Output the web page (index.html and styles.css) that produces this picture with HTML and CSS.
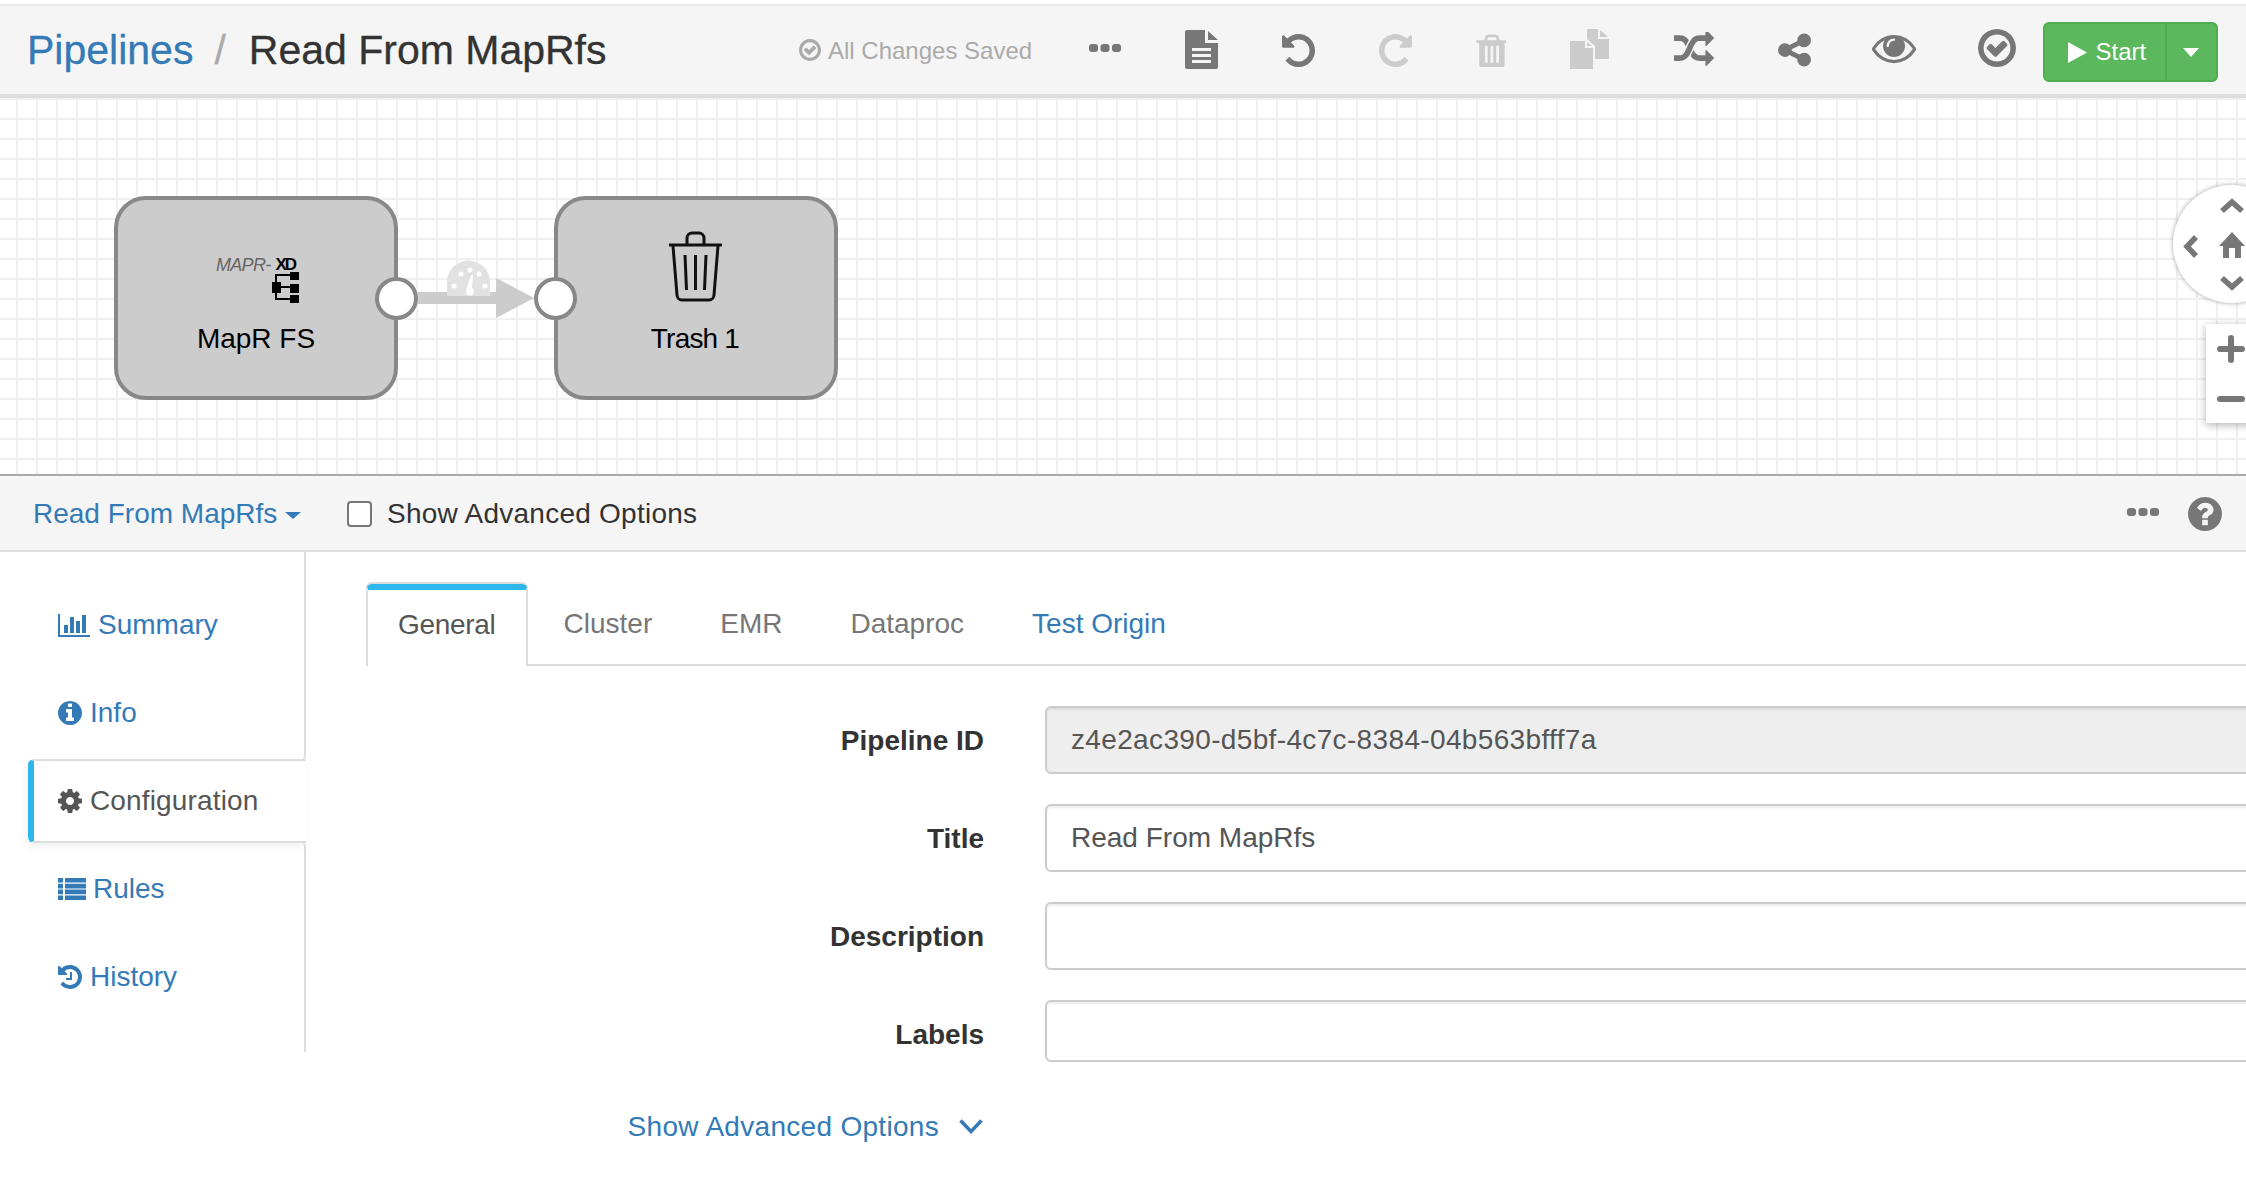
FILE: index.html
```html
<!DOCTYPE html>
<html lang="en">
<head>
<meta charset="utf-8">
<title>Read From MapRfs</title>
<link rel="stylesheet" href="styles.css">
</head>
<body>
<header class="topbar">
  <div class="crumbs">
    <a class="crumb-link">Pipelines</a>
    <span class="crumb-sep">/</span>
    <span class="crumb-title">Read From MapRfs</span>
  </div>
  <div class="saved">
    <svg class="saved-icon" viewBox="128 128 1536 1536"><path d="M1299 813l-422 422q-19 19-45 19t-45-19l-294-294q-19-19-19-45t19-45l102-102q19-19 45-19t45 19l147 147 275-275q19-19 45-19t45 19l102 102q19 19 19 45t-19 45zm141 83q0-148-73-273t-198-198-273-73-273 73-198 198-73 273 73 273 198 198 273 73 273-73 198-198 73-273zm224 0q0 209-103 385.500t-279.500 279.500-385.500 103-385.500-103-279.500-279.500-103-385.500 103-385.500 279.500-279.500 385.500-103 385.500 103 279.500 279.500 103 385.500z"/></svg>
    <span>All Changes Saved</span>
  </div>
  <div class="tools">
    <svg class="tool dots" viewBox="0 0 32 8"><rect x="0" y="0" width="9" height="8" rx="3"/><rect x="11.500" y="0" width="9" height="8" rx="3"/><rect x="23" y="0" width="9" height="8" rx="3"/></svg>
    <svg class="tool doc" viewBox="0 0 33 39"><path fill-rule="evenodd" d="M2 0H20V13H33V37a2 2 0 0 1-2 2H2a2 2 0 0 1-2-2V2a2 2 0 0 1 2-2zM7 18v3H26v-3zM7 24v3H26v-3zM7 30v3H26v-3z"/><path d="M23 1L33 10H23z"/></svg>
    <svg class="tool undo" viewBox="128 128 1536 1536"><path d="M1664 896q0 156-61 298t-164 245-245 164-298 61q-172 0-327-72.500t-264-204.500q-7-10-6.500-22.500t8.500-20.500l137-138q10-9 25-9 16 2 23 12 73 95 179 147t225 52q104 0 198.500-40.500t163.500-109.500 109.500-163.500 40.500-198.500-40.500-198.500-109.500-163.500-163.500-109.500-198.500-40.500q-98 0-188 35.500t-160 101.500l137 138q31 30 14 69-17 40-59 40h-448q-26 0-45-19t-19-45v-448q0-42 40-59 39-17 69 14l130 129q107-101 244.500-156.500t284.500-55.500q156 0 298 61t245 164 164 245 61 298z"/></svg>
    <svg class="tool undo redo off" viewBox="128 128 1536 1536"><path d="M1664 896q0 156-61 298t-164 245-245 164-298 61q-172 0-327-72.500t-264-204.500q-7-10-6.500-22.500t8.500-20.500l137-138q10-9 25-9 16 2 23 12 73 95 179 147t225 52q104 0 198.500-40.500t163.500-109.500 109.500-163.500 40.500-198.500-40.500-198.500-109.500-163.500-163.500-109.500-198.500-40.500q-98 0-188 35.500t-160 101.500l137 138q31 30 14 69-17 40-59 40h-448q-26 0-45-19t-19-45v-448q0-42 40-59 39-17 69 14l130 129q107-101 244.500-156.500t284.500-55.500q156 0 298 61t245 164 164 245 61 298z"/></svg>
    <svg class="tool trash off" viewBox="128 64 1408 1536"><path d="M704 1376v-704q0-14-9-23t-23-9h-64q-14 0-23 9t-9 23v704q0 14 9 23t23 9h64q14 0 23-9t9-23zm256 0v-704q0-14-9-23t-23-9h-64q-14 0-23 9t-9 23v704q0 14 9 23t23 9h64q14 0 23-9t9-23zm256 0v-704q0-14-9-23t-23-9h-64q-14 0-23 9t-9 23v704q0 14 9 23t23 9h64q14 0 23-9t9-23zm-544-992h448l-48-117q-7-9-17-11h-317q-10 2-17 11zm928 32v64q0 14-9 23t-23 9h-96v948q0 83-47 143.500t-113 60.500h-832q-66 0-113-58.500t-47-141.500v-952h-96q-14 0-23-9t-9-23v-64q0-14 9-23t23-9h309l70-167q15-37 54-63t79-26h320q40 0 79 26t54 63l70 167h309q14 0 23 9t9 23z"/></svg>
    <svg class="tool copy off" viewBox="0 0 39 40"><path fill-rule="evenodd" d="M0 12H15V19H23V40H0zM17 13L22 17H17z"/><path d="M17 0H28V10H39V30H25V17L17 10zM30 1L38 8H30z"/></svg>
    <svg class="tool shuffle" viewBox="0 128 1792 1536"><path d="M666 481q-60 92-137 273-22-45-37-72.500t-40.500-63.500-51-56.500-63-35-81.500-14.500h-224q-14 0-23-9t-9-23v-192q0-14 9-23t23-9h224q250 0 410 225zm1126 799q0 14-9 23l-320 320q-9 9-23 9-13 0-22.500-9.500t-9.500-22.500v-192q-32 0-85 .5t-81 1-73-1-71-5-64-10.500-63-18.500-58-28.500-59-40-55-53.500-56-69.500q59-93 136-273 22 45 37 72.500t40.500 63.500 51 56.500 63 35 81.500 14.500h256v-192q0-14 9-23t23-9q12 0 24 10l319 319q9 9 9 23zm0-896q0 14-9 23l-320 320q-9 9-23 9-13 0-22.500-9.500t-9.500-22.500v-192h-256q-48 0-87 15t-69 45-51 61.500-45 77.500q-32 62-78 171-29 66-49.500 111t-54 105-64 100-74 83-90 68.500-106.500 42-128 16.500h-224q-14 0-23-9t-9-23v-192q0-14 9-23t23-9h224q48 0 87-15t69-45 51-61.500 45-77.500q32-62 78-171 29-66 49.500-111t54-105 64-100 74-83 90-68.500 106.500-42 128-16.500h256v-192q0-14 9-23t23-9q12 0 24 10l319 319q9 9 9 23z"/></svg>
    <svg class="tool share" viewBox="128 128 1536 1536"><path d="M1344 1024q133 0 226.500 93.500t93.500 226.500-93.500 226.500-226.500 93.500-226.500-93.500-93.500-226.500q0-12 2-34l-360-180q-92 86-218 86-133 0-226.500-93.500t-93.500-226.500 93.500-226.500 226.500-93.500q126 0 218 86l360-180q-2-22-2-34 0-133 93.500-226.500t226.500-93.500 226.500 93.500 93.500 226.500-93.500 226.500-226.500 93.500q-126 0-218-86l-360 180q2 22 2 34t-2 34l360 180q92-86 218-86z"/></svg>
    <svg class="tool eye" viewBox="0 256 1792 1280"><path d="M1664 960q-152-236-381-353 61 104 61 225 0 185-131.500 316.500t-316.500 131.500-316.500-131.500-131.500-316.500q0-121 61-225-229 117-381 353 133 205 333.500 326.500t434.500 121.500 434.500-121.500 333.500-326.500zm-720-384q0-20-14-34t-34-14q-125 0-214.500 89.500t-89.500 214.500q0 20 14 34t34 14 34-14 14-34q0-86 61-147t147-61q20 0 34-14t14-34zm848 384q0 34-20 69-140 230-376.500 368.500t-499.500 138.500-499.500-139-376.500-368q-20-35-20-69t20-69q140-229 376.500-368t499.500-139 499.500 139 376.500 368q20 35 20 69z"/></svg>
    <svg class="tool check" viewBox="128 128 1536 1536"><path d="M1299 813l-422 422q-19 19-45 19t-45-19l-294-294q-19-19-19-45t19-45l102-102q19-19 45-19t45 19l147 147 275-275q19-19 45-19t45 19l102 102q19 19 19 45t-19 45zm141 83q0-148-73-273t-198-198-273-73-273 73-198 198-73 273 73 273 198 198 273 73 273-73 198-198 73-273zm224 0q0 209-103 385.500t-279.500 279.500-385.500 103-385.500-103-279.500-279.500-103-385.500 103-385.500 279.500-279.500 385.500-103 385.500 103 279.500 279.500 103 385.500z"/></svg>
  </div>
  <div class="start">
    <div class="start-main">
      <svg class="play" viewBox="0 0 19 21"><path d="M0 0L19 10.500L0 21z"/></svg>
      <span>Start</span>
    </div>
    <div class="start-caret"><i class="caret-white"></i></div>
  </div>
</header>

<section class="canvas">
  <div class="node node-source">
    <div class="mapr-logo"><span class="mapr-thin">MAPR-</span><b class="mapr-xd">XD</b></div>
    <svg class="mapr-tree" viewBox="0 0 27 31"><path class="tree-line" d="M4 15V3H18M4 15H18M4 15V27H18"/><rect x="0" y="10" width="9" height="11"/><rect x="18" y="0" width="9" height="8"/><rect x="18" y="12" width="9" height="9"/><rect x="18" y="23" width="9" height="8"/></svg>
    <div class="node-label">MapR FS</div>
    <span class="port port-out"></span>
  </div>
  <svg class="edge" viewBox="0 0 130 60">
    <path class="edge-arrow" d="M8 32H86V18L124 38L86 58V44H8z"/>
    <path class="gauge" d="M37 36V22a21 21 0 0 1 43 0V36z"/>
    <circle class="gauge-dot" cx="44" cy="26" r="2.500"/><circle class="gauge-dot" cx="51" cy="14" r="2.500"/><circle class="gauge-dot" cx="60" cy="10" r="2.500"/><circle class="gauge-dot" cx="69" cy="14" r="2.500"/><circle class="gauge-dot" cx="75" cy="26" r="2.500"/>
    <path class="gauge-dot" d="M61 15L63 15L62 28a4 4 0 1 1-6 3z"/>
  </svg>
  <div class="node node-target">
    <svg class="bin" viewBox="0 0 55 72"><path class="bin-line" d="M1 15H54M19 15V8a5 5 0 0 1 5-5H31a5 5 0 0 1 5 5V15M5 16L9 65a5 5 0 0 0 5 5H41a5 5 0 0 0 5-5L50 16M17 25L18.500 60M27.500 25V60M38 25L36.500 60"/></svg>
    <div class="node-label node-label-tight">Trash 1</div>
    <span class="port port-in"></span>
  </div>
  <div class="pan">
    <svg class="pan-icons" viewBox="0 0 73 118">
      <path class="nav-stroke" d="M49 26L59 17L69 26M23 52L14 61.500L23 71M49 93L59 102L69 93"/>
      <path class="nav-fill" fill-rule="evenodd" d="M59 47L72 61H68V73H62V63H56V73H50V61H46z"/>
    </svg>
  </div>
  <div class="zoomer">
    <svg class="zoom-icons" viewBox="0 0 40 99"><path class="zoom-stroke" d="M14 25H36M25 14V36M14 75H36"/></svg>
  </div>
</section>

<div class="subbar">
  <a class="pipe-menu">Read From MapRfs<i class="caret-blue"></i></a>
  <label class="adv-check"><input class="adv-box" type="checkbox"><span class="adv-text">Show Advanced Options</span></label>
  <div class="subbar-right">
    <svg class="sub-dots" viewBox="0 0 32 10"><rect x="0" y="1" width="9" height="8" rx="3"/><rect x="11.500" y="1" width="9" height="8" rx="3"/><rect x="23" y="1" width="9" height="8" rx="3"/></svg>
    <svg class="help" viewBox="128 128 1536 1536"><path d="M1024 1376v-192q0-14-9-23t-23-9h-192q-14 0-23 9t-9 23v192q0 14 9 23t23 9h192q14 0 23-9t9-23zm256-672q0-88-55.500-163t-138.500-116-170-41q-243 0-371 213-15 24 8 42l132 100q7 6 19 6 16 0 25-12 53-68 86-92 34-24 86-24 48 0 85.500 26t37.500 59q0 38-20 61t-68 45q-63 28-115.500 86.500t-52.500 125.500v36q0 14 9 23t23 9h192q14 0 23-9t9-23q0-19 21.500-49.500t54.500-49.500q32-18 49-28.500t46-35 44.500-48 28-60.500 12.500-81zm384 192q0 209-103 385.500t-279.500 279.500-385.500 103-385.500-103-279.500-279.500-103-385.500 103-385.500 279.500-279.500 385.500-103 385.500 103 279.500 279.500 103 385.500z"/></svg>
  </div>
</div>

<main class="panel">
  <nav class="side">
    <div class="side-top"></div>
    <a class="side-item">
      <svg class="side-icon icon-bars" viewBox="0 0 2048 1792"><path d="M640 896v512h-256v-512h256zm384-512v1024h-256v-1024h256zm1024 1152v128h-2048v-1472h128v1344h1920zm-640-896v768h-256v-768h256zm384-384v1152h-256v-1152h256z"/></svg>
      <span>Summary</span>
    </a>
    <a class="side-item side-before">
      <svg class="side-icon icon-round" viewBox="128 128 1536 1536"><path d="M1152 1376v-160q0-14-9-23t-23-9h-96v-512q0-14-9-23t-23-9h-320q-14 0-23 9t-9 23v160q0 14 9 23t23 9h96v320h-96q-14 0-23 9t-9 23v160q0 14 9 23t23 9h448q14 0 23-9t9-23zm-128-896v-160q0-14-9-23t-23-9h-192q-14 0-23 9t-9 23v160q0 14 9 23t23 9h192q14 0 23-9t9-23zm640 416q0 209-103 385.500t-279.500 279.500-385.500 103-385.500-103-279.500-279.500-103-385.500 103-385.500 279.500-279.500 385.500-103 385.500 103 279.500 279.500 103 385.500z"/></svg>
      <span>Info</span>
    </a>
    <a class="side-item side-active">
      <svg class="side-icon icon-round" viewBox="128 128 1536 1536"><path d="M1152 896q0-106-75-181t-181-75-181 75-75 181 75 181 181 75 181-75 75-181zm512-109v222q0 12-8 23t-20 13l-185 28q-19 54-39 91 35 50 107 138 10 12 10 25t-9 23q-27 37-99 108t-94 71q-12 0-26-9l-138-108q-44 23-91 38-16 136-29 186-7 28-36 28h-222q-14 0-24.500-8.500t-11.500-21.500l-28-184q-49-16-90-37l-141 107q-10 9-25 9-14 0-25-11-126-114-165-168-7-10-7-23 0-12 8-23 15-21 51-66.500t54-70.500q-27-50-41-99l-183-27q-13-2-21-12.500t-8-23.500v-222q0-12 8-23t19-13l186-28q14-46 39-92-40-57-107-138-10-12-10-24 0-10 9-23 26-36 98.500-107.500t94.500-71.500q13 0 26 10l138 107q44-23 91-38 16-136 29-186 7-28 36-28h222q14 0 24.500 8.500t11.500 21.500l28 184q49 16 90 37l142-107q9-9 24-9 13 0 25 10 129 119 165 170 7 8 7 22 0 12-8 23-15 21-51 66.500t-54 70.500q26 50 41 98l183 28q13 2 21 12.500t8 23.500z"/></svg>
      <span class="side-config">Configuration</span>
    </a>
    <a class="side-item side-after">
      <svg class="side-icon icon-list" viewBox="0 0 28 22"><path d="M0 0H5V4.600H0zM7 0H28V4.600H7zM0 5.800H5V10.400H0zM7 5.800H28V10.400H7zM0 11.600H5V16.200H0zM7 11.600H28V16.200H7zM0 17.400H5V22H0zM7 17.400H28V22H7z"/></svg>
      <span>Rules</span>
    </a>
    <a class="side-item">
      <svg class="side-icon icon-round" viewBox="128 128 1536 1536"><path d="M1664 896q0 156-61 298t-164 245-245 164-298 61q-172 0-327-72.500t-264-204.500q-7-10-6.500-22.500t8.500-20.500l137-138q10-9 25-9 16 2 23 12 73 95 179 147t225 52q104 0 198.500-40.500t163.500-109.500 109.500-163.500 40.500-198.500-40.500-198.500-109.500-163.500-163.500-109.500-198.500-40.500q-98 0-188 35.500t-160 101.500l137 138q31 30 14 69-17 40-59 40h-448q-26 0-45-19t-19-45v-448q0-42 40-59 39-17 69 14l130 129q107-101 244.500-156.500t284.500-55.500q156 0 298 61t245 164 164 245 61 298zm-640-288v448q0 14-9 23t-23 9h-320q-14 0-23-9t-9-23v-64q0-14 9-23t23-9h224v-352q0-14 9-23t23-9h64q14 0 23 9t9 23z"/></svg>
      <span>History</span>
    </a>
    <div class="side-bottom"></div>
  </nav>
  <div class="content">
    <div class="tabs">
      <span class="tab tab-active"><span class="tab-tight">General</span></span>
      <span class="tab">Cluster</span>
      <span class="tab">EMR</span>
      <span class="tab">Dataproc</span>
      <span class="tab tab-link">Test Origin</span>
    </div>
    <form class="form">
      <div class="row"><label class="row-label">Pipeline ID</label><input class="field field-off" value="z4e2ac390-d5bf-4c7c-8384-04b563bfff7a" disabled></div>
      <div class="row"><label class="row-label">Title</label><input class="field" value="Read From MapRfs"></div>
      <div class="row"><label class="row-label">Description</label><input class="field" value=""></div>
      <div class="row"><label class="row-label">Labels</label><input class="field field-short" value=""></div>
      <a class="more"><span class="more-text">Show Advanced Options</span><svg class="more-chev" viewBox="0 0 24 15"><path d="M1.500 1.500L12 12.500L22.500 1.500"/></svg></a>
    </form>
  </div>
</main>
</body>
</html>
```
FILE: styles.css
```css
* { box-sizing: border-box; }
html, body { margin: 0; height: 1194px; overflow: hidden; background: #fff; }
body { font-family: "Liberation Sans", Arial, sans-serif; font-size: 28px; line-height: 40px; color: #333; width: 2246px; }
a { color: #337ab7; text-decoration: none; }

.topbar { margin-top: 4px; height: 94px; display: flex; align-items: center; background: #f5f5f5; border-top: 2px solid #e7e7e7; border-bottom: 4px solid #ddd; padding: 0 28px 0 27px; }
.crumbs { display: flex; align-items: center; font-size: 41px; width: 772px; flex: none; -webkit-text-stroke: .3px currentColor; }
.crumb-link { color: #337ab7; }
.crumb-sep { color: #aaa; margin: 0 23px 0 21px; }
.crumb-title { color: #333; }
.saved { display: flex; align-items: center; gap: 7px; color: #aaa; font-size: 24px; width: 290px; flex: none; padding-top: 2px; }
.saved-icon { width: 22px; height: 22px; fill: #aaa; margin-top: -2px; }
.tools { display: flex; align-items: center; gap: 63.500px; flex: none; }
.tool { display: block; fill: #777; flex: none; }
.tool.off { fill: #ccc; }
.dots { width: 32px; height: 8px; margin-top: -4px; }
.doc { width: 33px; height: 39px; margin-top: -2px; }
.undo { width: 33px; height: 33px; margin-left: 1px; }
.redo { transform: scaleX(-1); margin-left: 0; }
.trash { width: 31px; height: 34px; }
.copy { width: 39px; height: 40px; margin-top: -3px; }
.shuffle { width: 40px; height: 35px; margin-top: -2px; margin-left: 2px; }
.share { width: 33px; height: 34px; }
.eye { width: 44px; height: 33px; margin-top: -5px; margin-left: -2px; }
.check { width: 38px; height: 38px; margin-top: -4px; margin-left: -2px; }
.start { flex: none; margin-left: 27px; width: 175px; height: 60px; display: flex; background: #5cb85c; border: 2px solid #4cae4c; border-radius: 6px; color: #fff; font-size: 24px; margin-top: 4px; }
.start-main { flex: none; width: 122px; display: flex; align-items: center; gap: 9px; padding-left: 23px; border-right: 2px solid #4cae4c; }
.play { width: 19px; height: 21px; fill: #fff; flex: none; }
.start-caret { flex: 1; display: flex; align-items: center; justify-content: center; }
.caret-white { width: 0; height: 0; border-left: 8px solid transparent; border-right: 8px solid transparent; border-top: 9px solid #fff; }

.canvas { position: relative; height: 378px; overflow: hidden; border-bottom: 2px solid #aaa; background-color: #fff; background-image: linear-gradient(#f0f0f0 2px, transparent 2px), linear-gradient(90deg, #f0f0f0 2px, transparent 2px); background-size: 20px 20px; background-position: 16px 0; }
.node { position: absolute; top: 98px; width: 284px; height: 204px; background: #ccc; border: 4px solid #888; border-radius: 32px; color: #000; }
.node-source { left: 114px; }
.node-target { left: 554px; }
.node-label { position: absolute; left: 0; right: 0; top: 119px; text-align: center; }
.node-label-tight { letter-spacing: -.8px; padding-right: 2px; }
.port { position: absolute; top: 77px; width: 43px; height: 43px; background: #fff; border: 4px solid #888; border-radius: 50%; }
.port-out { right: -24px; }
.port-in { left: -24px; }
.mapr-logo { position: absolute; left: 98px; top: 56px; font-size: 18px; line-height: 18px; white-space: nowrap; display: flex; align-items: center; }
.mapr-thin { color: #666; font-style: italic; letter-spacing: -.7px; }
.mapr-xd { color: #000; margin-left: 5px; font-size: 17px; letter-spacing: -2px; }
.mapr-tree { position: absolute; left: 154px; top: 72px; width: 27px; height: 31px; }
.tree-line { fill: none; stroke: #000; stroke-width: 2; }
.edge { position: absolute; left: 410px; top: 162px; width: 130px; height: 60px; }
.edge-arrow { fill: #ccc; }
.gauge { fill: #e2e2e2; }
.gauge-dot { fill: #fff; }
.bin { position: absolute; left: 110px; top: 30px; width: 55px; height: 72px; }
.bin-line { fill: none; stroke: #111; stroke-width: 3; }
.pan { position: absolute; left: 2173px; top: 87px; width: 118px; height: 118px; border-radius: 50%; background: #fff; box-shadow: 0 0 5px rgba(0,0,0,.35); }
.pan-icons { display: block; width: 73px; height: 118px; }
.nav-stroke { fill: none; stroke: #777; stroke-width: 5.500; }
.nav-fill { fill: #777; }
.zoomer { position: absolute; left: 2206px; top: 226px; width: 60px; height: 99px; background: #fff; box-shadow: 0 2px 8px rgba(0,0,0,.3); }
.zoom-icons { display: block; width: 40px; height: 99px; }
.zoom-stroke { fill: none; stroke: #777; stroke-width: 6; stroke-linecap: round; }

.subbar { height: 76px; display: flex; align-items: center; background: #f5f5f5; border-bottom: 2px solid #ddd; padding: 2px 24px 0 33px; }
.pipe-menu { display: flex; align-items: center; width: 314px; flex: none; }
.caret-blue { width: 0; height: 0; margin-left: 8px; margin-top: 2px; border-left: 8px solid transparent; border-right: 8px solid transparent; border-top: 7px solid #337ab7; }
.adv-check { display: flex; align-items: center; gap: 15px; color: #333; }
.adv-text { letter-spacing: .25px; }
.adv-box { appearance: none; margin: 0; width: 25px; height: 26px; background: #fff; border: 2px solid #767676; border-radius: 4px; }
.subbar-right { margin-left: auto; display: flex; align-items: center; gap: 29px; }
.sub-dots { width: 32px; height: 10px; fill: #777; margin-top: -4px; }
.help { width: 34px; height: 34px; fill: #777; }

.panel { display: flex; height: 642px; }
.side { flex: none; width: 306px; padding-left: 28px; display: flex; flex-direction: column; }
.side-top { height: 29px; border-right: 2px solid #ddd; }
.side-bottom { height: 31px; border-right: 2px solid #ddd; }
.side-item { height: 88px; display: flex; align-items: center; gap: 8px; padding-left: 30px; border-right: 2px solid #ddd; fill: #337ab7; }
.side-before { height: 90px; padding-bottom: 2px; border-bottom-right-radius: 4px; }
.side-after { height: 90px; padding-top: 2px; border-top-right-radius: 4px; gap: 7px; }
.side-active { height: 84px; color: #555; fill: #555; background: #fff; border-top: 2px solid #ddd; border-bottom: 2px solid #ddd; border-right: 0; border-left: 6px solid #2db8ec; border-radius: 6px 0 0 6px; padding-left: 24px; box-shadow: -2px 4px 8px rgba(0,0,0,.06); }
.side-config { letter-spacing: .15px; }
.side-icon { flex: none; display: block; }
.icon-bars { width: 32px; height: 28px; }
.icon-round { width: 24px; height: 24px; }
.icon-list { width: 28px; height: 22px; }

.content { flex: 1; min-width: 0; }
.tabs { display: flex; gap: 4px; margin: 32px 0 0 60px; border-bottom: 2px solid #ddd; height: 82px; }
.tab { height: 80px; padding: 0 32px; display: flex; align-items: center; color: #777; }
.tab-active { height: 82px; color: #555; background: #fff; border: 2px solid #ddd; border-top: 6px solid #2db8ec; border-bottom: 0; border-radius: 6px 6px 0 0; padding: 0 30px 6px; box-shadow: 0 -2px 0 #ddd; }
.tab-tight { letter-spacing: -.3px; }
.tab-link { color: #337ab7; }
.form { display: flex; flex-direction: column; gap: 30px; margin-top: 40px; }
.row { display: flex; align-items: flex-start; gap: 61px; }
.row-label { flex: none; width: 678px; height: 68px; padding-top: 1px; text-align: right; font-weight: 700; line-height: 68px; color: #333; }
.field { flex: none; width: 1300px; height: 68px; padding: 0 24px; font: inherit; color: #555; background: #fff; border: 2px solid #ccc; border-radius: 6px; box-shadow: inset 0 2px 2px rgba(0,0,0,.075); outline: 0; }
.field-off { background: #eee; letter-spacing: .35px; }
.field-short { height: 62px; }
.more { display: flex; align-items: center; justify-content: flex-end; gap: 20px; width: 677px; margin-top: 9px; }
.more-text { letter-spacing: .3px; }
.more-chev { width: 24px; height: 15px; fill: none; stroke: #337ab7; stroke-width: 3.500; margin-top: -2px; }
```
